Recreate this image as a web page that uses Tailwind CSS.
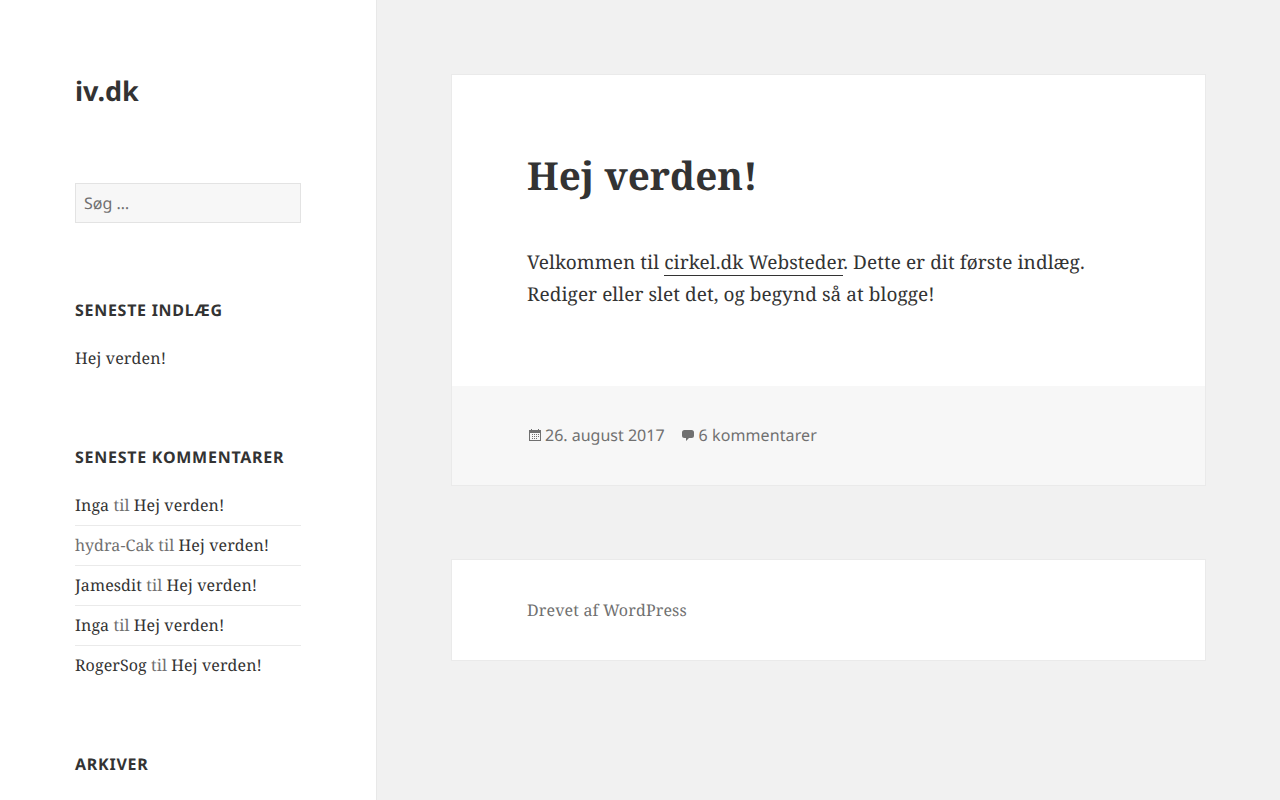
<!DOCTYPE html>
<html lang="da"><head><meta charset="utf-8"><title>iv.dk</title>
<script src="https://cdn.jsdelivr.net/npm/@tailwindcss/browser@4"></script></head>
<body class="bg-[#f1f1f1] h-[800px] overflow-hidden flex font-['Noto_Serif','DejaVu_Serif',serif] text-[#333] [text-rendering:geometricPrecision]">
<aside class="w-[377px] shrink-0 h-[800px] overflow-hidden bg-white border-r border-[#e8e8e8] pl-[75px] pr-[75px] pt-[75px]">
<h1 class="font-['Noto_Sans',sans-serif] font-bold text-[27px] leading-[32px] mt-0">iv.dk</h1>
<div class="mt-[76px] h-[40px] border border-[#e3e3e3] bg-[#f7f7f7] px-2 font-['Noto_Sans',sans-serif] text-[16px] leading-[38px] text-[#707070]">Søg …</div>
<h2 class="mt-[75px] font-['Noto_Sans',sans-serif] font-bold text-[16px] leading-[24px] tracking-[0.72px]">SENESTE INDLÆG</h2>
<div class="mt-[24px] text-[16px] leading-[24px] tracking-[0.14px]">Hej verden!</div>
<h2 class="mt-[75px] font-['Noto_Sans',sans-serif] font-bold text-[16px] leading-[24px] tracking-[0.74px]">SENESTE KOMMENTARER</h2>
<ul class="mt-[16px] text-[16px] leading-[24px] tracking-[0.1px]">
<li class="pt-2 border-b border-[#eaeaea] h-[41px]">Inga <span class="text-[#707070]">til</span> Hej verden!</li>
<li class="pt-[7px] border-b border-[#eaeaea] h-[40px]"><span class="text-[#707070]">hydra-Cak til</span> Hej verden!</li>
<li class="pt-[7px] border-b border-[#eaeaea] h-[40px]">Jamesdit <span class="text-[#707070]">til</span> Hej verden!</li>
<li class="pt-[7px] border-b border-[#eaeaea] h-[40px]">Inga <span class="text-[#707070]">til</span> Hej verden!</li>
<li class="pt-[7px] h-[40px]">RogerSog <span class="text-[#707070]">til</span> Hej verden!</li>
</ul>
<h2 class="mt-[66px] font-['Noto_Sans',sans-serif] font-bold text-[16px] leading-[24px] tracking-[0.74px]">ARKIVER</h2>
</aside>
<main class="flex-1 pl-[74px] pr-[74px] pt-[74px]">
<article class="bg-white border border-[#eaeaea]">
<div class="px-[75px] pt-[76px] h-[311px]">
<h2 class="font-bold text-[38.7px] leading-[50px]">Hej verden!</h2>
<p class="mt-[45px] text-[19px] leading-[32px] tracking-[0.06px]">Velkommen til <a class="border-b border-[#333]">cirkel.dk Websteder</a>. Dette er dit første indlæg.<br>Rediger eller slet det, og begynd så at blogge!</p>
</div>
<footer class="bg-[#f7f7f7] h-[99px] px-[75px] pb-[2px] flex items-center font-['Noto_Sans',sans-serif] text-[16px] text-[#707070]">
<svg class="w-[16px] h-[16px] mr-[2px]" viewBox="0 0 16 16" fill="#707070"><path fill-rule="evenodd" d="M4 2h1v1h6V2h1v1h2v11H2V3h2zM3 6v7h10V6z"/><path d="M5 7h1v1H5zM7 7h1v1H7zM9 7h1v1H9zM11 7h1v1h-1zM5 9h1v1H5zM7 9h1v1H7zM9 9h1v1H9zM11 9h1v1h-1zM5 11h1v1H5zM7 11h1v1H7zM9 11h1v1H9z"/></svg><span>26. august 2017</span>
<svg class="w-[16px] h-[16px] ml-[15px] mr-[3px]" viewBox="0 0 16 16" fill="#707070"><path d="M4.5 3h7A2.5 2.5 0 0 1 14 5.500v3a2.500 2.500 0 0 1-2.500 2.500H9l-3 3v-3H4.500A2.500 2.500 0 0 1 2 8.500v-3A2.500 2.500 0 0 1 4.500 3z"/></svg><span class="tracking-[0.1px]">6 kommentarer</span>
</footer>
</article>
<footer class="mt-[73px] bg-white border border-[#eaeaea] h-[102px] px-[75px] flex items-center text-[16px] tracking-[0.15px] text-[#707070]">Drevet af WordPress</footer>
</main>
</body></html>
